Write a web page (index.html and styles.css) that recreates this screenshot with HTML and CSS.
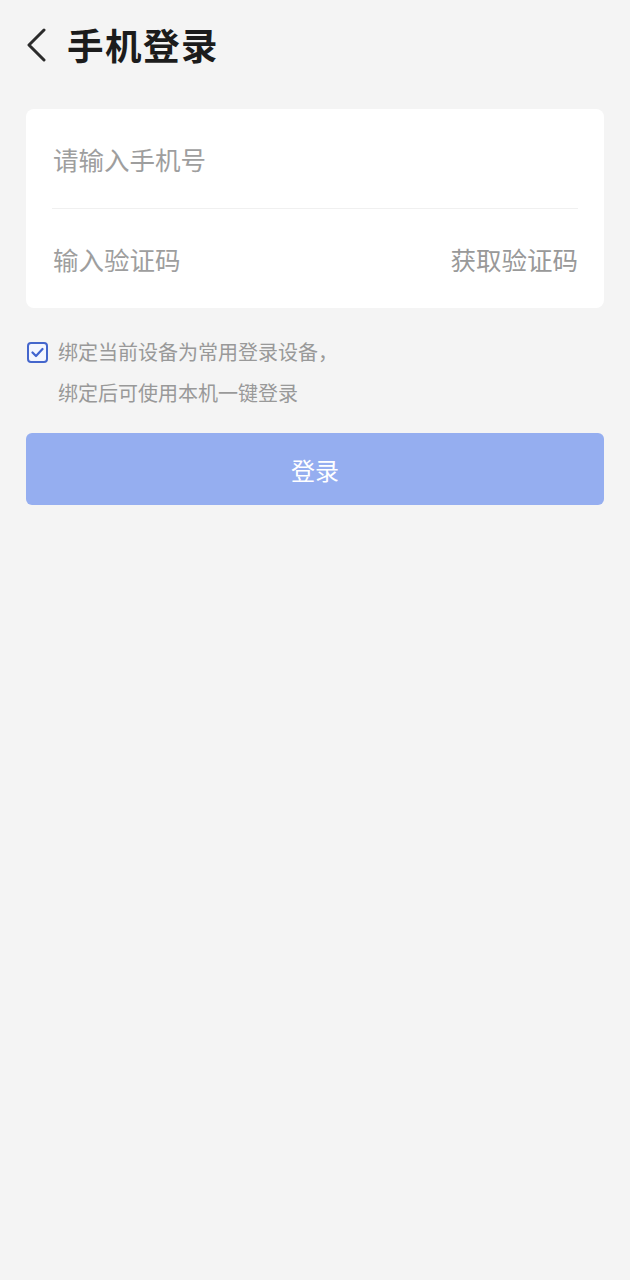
FILE: index.html
```html
<!DOCTYPE html>
<html lang="zh-CN">
<head>
<meta charset="utf-8">
<title>手机登录</title>
<link rel="stylesheet" href="styles.css">
</head>
<body>
<div class="page">
  <header class="header">
    <svg class="back" width="24" height="34" viewBox="0 0 24 34" aria-hidden="true">
      <polyline points="19,2 4,17 19,32" fill="none" stroke="#2b2b2b" stroke-width="3" stroke-linecap="round" stroke-linejoin="round"/>
    </svg>
    <h1 class="title">手机登录</h1>
  </header>

  <section class="card">
    <div class="row">
      <span class="placeholder">请输入手机号</span>
    </div>
    <div class="divider"></div>
    <div class="row">
      <span class="placeholder">输入验证码</span>
      <span class="get-code">获取验证码</span>
    </div>
  </section>

  <div class="agree">
    <span class="checkbox">
      <svg width="13" height="11" viewBox="0 0 13 11" aria-hidden="true">
        <polyline points="1.5,5.5 5,9 11.5,2" fill="none" stroke="#3f63cf" stroke-width="2.2" stroke-linecap="round" stroke-linejoin="round"/>
      </svg>
    </span>
    <div class="agree-text">
      <p>绑定当前设备为常用登录设备，</p>
      <p>绑定后可使用本机一键登录</p>
    </div>
  </div>

  <button class="login" type="button">登录</button>
</div>
</body>
</html>
```

FILE: styles.css
```css
* { box-sizing: border-box; }
html, body {
  margin: 0;
  padding: 0;
  background: #f4f4f4;
}
body {
  font-family: "Noto Sans CJK SC", "Noto Sans", sans-serif;
  width: 630px;
  min-height: 1280px;
}
.page {
  display: flex;
  flex-direction: column;
}
.header {
  height: 90px;
  display: flex;
  align-items: center;
  padding-left: 25px;
}
.back {
  display: block;
}
.title {
  margin: 0 0 0 18px;
  font-size: 36.5px;
  font-weight: 700;
  color: #1c1c1c;
  line-height: 1;
  letter-spacing: 1.5px;
}
.card {
  margin: 19px 26px 0;
  background: #fff;
  border-radius: 8px;
  padding: 0 26px;
}
.row {
  height: 99px;
  display: flex;
  align-items: center;
  justify-content: space-between;
}
.divider {
  height: 1px;
  background: #f0f0f0;
}
.placeholder, .get-code {
  font-size: 25.5px;
  color: #9e9e9e;
  line-height: 1;
  padding-left: 1px;
}
.get-code {
  color: #999;
}
.agree {
  margin: 23px 26px 0 27px;
  display: flex;
  align-items: flex-start;
}
.checkbox {
  width: 21px;
  height: 21px;
  margin-top: 11px;
  border: 2px solid #4466cc;
  border-radius: 4px;
  background: #f3f6ff;
  display: flex;
  align-items: center;
  justify-content: center;
  flex: none;
}
.agree-text {
  margin-left: 10px;
}
.agree-text p {
  margin: 0;
  font-size: 20px;
  line-height: 41px;
  color: #999;
}
.login {
  margin: 20px 26px 0;
  height: 72px;
  border: none;
  border-radius: 6px;
  background: #95aef0;
  color: #fff;
  font-family: inherit;
  font-size: 24px;
  padding: 0;
}
```
